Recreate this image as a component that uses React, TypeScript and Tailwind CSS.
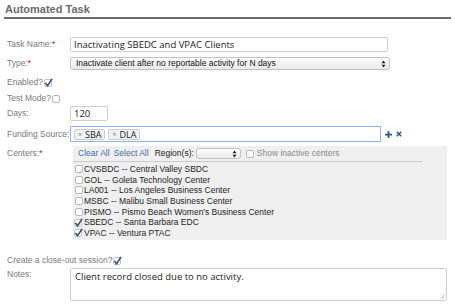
import React from 'react';

const centers = [
  { code: 'CVSBDC', name: 'Central Valley SBDC', checked: false },
  { code: 'GOL', name: 'Goleta Technology Center', checked: false },
  { code: 'LA001', name: 'Los Angeles Business Center', checked: false },
  { code: 'MSBC', name: 'Malibu Small Business Center', checked: false },
  { code: 'PISMO', name: "Pismo Beach Women's Business Center", checked: false },
  { code: 'SBEDC', name: 'Santa Barbara EDC', checked: true },
  { code: 'VPAC', name: 'Ventura PTAC', checked: true },
];

function Check({ checked }: { checked?: boolean }) {
  if (checked) {
    return (
      <span className="relative inline-flex h-[9px] w-[9px] items-center justify-center">
        <span className="absolute left-0 top-[1px] h-[8px] w-[8px] rounded-[2px] border border-[#c4c4c4] bg-white" />
        <svg viewBox="0 0 10 10" className="relative h-[9px] w-[9px]">
          <path d="M1.5 5.5 L4 8.5 L9 1" fill="none" stroke="#2b4f86" strokeWidth="1.8" />
        </svg>
      </span>
    );
  }
  return <span className="inline-block h-[8px] w-[8px] rounded-[2px] border border-[#b8b8b8] bg-white" />;
}

function Arrows() {
  return (
    <svg viewBox="0 0 6 10" className="h-[8px] w-[5px]">
      <path d="M3 0.5 L5.5 4 L0.5 4 Z M3 9.5 L5.5 6 L0.5 6 Z" fill="#222" />
    </svg>
  );
}

function Label({ text, req }: { text: string; req?: boolean }) {
  return (
    <span className="whitespace-nowrap text-[8.5px] leading-[11px] text-[#7a7a7a]">
      {text}
      {req && <span className="text-[#d0021b]">*</span>}
    </span>
  );
}

export default function App() {
  const sans = { fontFamily: '"Liberation Sans", Arial, sans-serif' };
  const lucida = { fontFamily: '"Open Sans", "DejaVu Sans", sans-serif' };

  return (
    <div className="h-[306px] w-[455px] overflow-hidden bg-white text-[8.5px] leading-[11px]" style={sans}>
      {/* header */}
      <div className="px-[4px] pt-[3px]">
        <h1 className="pl-[1px] text-[11px] font-bold leading-[13px] text-[#6b6b6b]">Automated Task</h1>
        <div className="mt-[1px] h-[2px] bg-[#6a6a6a]" />
      </div>

      <div className="mt-[18px] pl-[7px] pr-[8px]">
        {/* task name */}
        <div className="flex h-[15px] items-center">
          <div className="w-[63px]"><Label text="Task Name:" req /></div>
          <div className="flex h-[15px] w-[318px] items-center rounded-[2px] border border-[#cfcfcf] px-[3px] text-[9.5px] text-[#1a1a1a]" style={lucida}>
            Inactivating SBEDC and VPAC Clients
          </div>
        </div>

        {/* type */}
        <div className="mt-[5px] flex h-[13px] items-center">
          <div className="w-[63px]"><Label text="Type:" req /></div>
          <div className="flex h-[13px] w-[320px] items-center justify-between rounded-[3px] border border-[#c2c2c2] bg-gradient-to-b from-[#fdfdfd] to-[#e9e9e9] pl-[5px] pr-[3px] text-[8.5px] text-[#111]">
            <span>Inactivate client after no reportable activity for N days</span>
            <Arrows />
          </div>
        </div>

        {/* enabled */}
        <div className="mt-[7px] flex h-[11px] items-center gap-[1px]">
          <Label text="Enabled?" />
          <Check checked />
        </div>

        {/* test mode */}
        <div className="mt-[5px] flex h-[11px] items-center gap-[1px]">
          <Label text="Test Mode?" />
          <Check />
        </div>

        {/* days */}
        <div className="mt-[2px] flex h-[15px] items-center">
          <div className="w-[63px]"><Label text="Days:" /></div>
          <div className="flex h-[15px] w-[38px] items-center rounded-[2px] border border-[#cfcfcf] px-[3px] text-[9.5px] text-[#1a1a1a]" style={lucida}>
            120
          </div>
        </div>

        {/* funding source */}
        <div className="mt-[5px] flex h-[16px] items-center">
          <div className="w-[63px]"><Label text="Funding Source:" /></div>
          <div className="flex h-[16px] w-[311px] items-center gap-[3px] rounded-[1px] border border-[#8fb3e6] px-[3px]">
            <span className="flex h-[11px] items-center gap-[3px] rounded-[2px] border border-[#cccccc] bg-[#f1f1f1] px-[3px] text-[9px] text-[#222]" style={lucida}>
              <span className="text-[7px] text-[#777]">×</span>SBA
            </span>
            <span className="flex h-[11px] items-center gap-[3px] rounded-[2px] border border-[#cccccc] bg-[#f1f1f1] px-[3px] text-[9px] text-[#222]" style={lucida}>
              <span className="text-[7px] text-[#777]">×</span>DLA
            </span>
          </div>
          <div className="ml-[4px] flex items-center gap-[4px]">
            <svg viewBox="0 0 8 8" className="h-[7px] w-[7px]">
              <path d="M4 0 V8 M0 4 H8" stroke="#2f5680" strokeWidth="2" />
            </svg>
            <svg viewBox="0 0 8 8" className="h-[6px] w-[6px]">
              <path d="M1 1 L7 7 M7 1 L1 7" stroke="#2f5680" strokeWidth="2" />
            </svg>
          </div>
        </div>

        {/* centers */}
        <div className="mt-[4px] flex">
          <div className="w-[66px] pt-[2px]"><Label text="Centers:" req /></div>
          <div className="h-[94px] w-[374px] bg-[#efefef] pl-[1px]">
            <div className="mr-[25px] flex h-[16px] items-center border-b border-[#c9c9c9] pl-[4px] text-[8.5px]">
              <span className="text-[#3d6fa6]">Clear All</span>
              <span className="ml-[4px] text-[#3d6fa6]">Select All</span>
              <span className="ml-[6px] text-[#222]">Region(s):</span>
              <span className="ml-[2px] flex h-[11px] w-[45px] items-center justify-end rounded-[3px] border border-[#c2c2c2] bg-gradient-to-b from-[#fdfdfd] to-[#e9e9e9] pr-[3px]">
                <Arrows />
              </span>
              <span className="ml-[5px] flex items-center gap-[3px] text-[#8a8a8a]">
                <Check />
                Show inactive centers
              </span>
            </div>
            <div className="mt-[2px] flex flex-col">
              {centers.map((c) => (
                <div key={c.code} className="flex h-[10.6px] items-center gap-[1px] text-[8.5px] leading-[10px] text-[#1e1e1e]">
                  <span className="flex w-[9px] justify-center"><Check checked={c.checked} /></span>
                  <span>{c.code} -- {c.name}</span>
                </div>
              ))}
            </div>
          </div>
        </div>

        {/* close-out session */}
        <div className="mt-[15px] flex h-[11px] items-center gap-[1px]">
          <Label text="Create a close-out session?" />
          <Check checked />
        </div>

        {/* notes */}
        <div className="mt-[2px] flex">
          <div className="w-[63px] pt-[1px]"><Label text="Notes:" /></div>
          <div className="relative h-[33px] w-[377px] rounded-[2px] border border-[#cfcfcf] px-[4px] pt-[1px] text-[9.5px] leading-[13px] text-[#1a1a1a]" style={lucida}>
            Client record closed due to no activity.
            <svg viewBox="0 0 6 6" className="absolute bottom-[1px] right-[1px] h-[5px] w-[5px]">
              <path d="M5.5 0.5 L0.5 5.5 M5.5 3 L3 5.5" stroke="#999" strokeWidth="0.8" />
            </svg>
          </div>
        </div>
      </div>
    </div>
  );
}
